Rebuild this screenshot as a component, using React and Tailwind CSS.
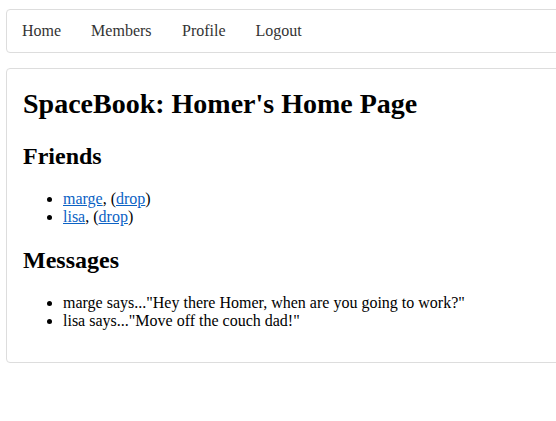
export default function App() {
  const serif = { fontFamily: '"Liberation Serif", "Times New Roman", serif' };
  return (
    <div className="w-full overflow-hidden bg-white text-black pb-[59px]" style={serif}>
      <nav className="ml-[6px] mt-[9px] w-[570px] h-[44px] border border-[#dddddd] rounded-[4px] flex items-center text-[16px] leading-[18px] text-[#333333]">
        <a className="px-[15px]">Home</a>
        <a className="px-[15px]">Members</a>
        <a className="pl-[15.5px] pr-[15px]">Profile</a>
        <a className="px-[15px]">Logout</a>
      </nav>
      <div className="ml-[6px] mt-[15px] w-[570px] border border-[#dddddd] rounded-[4px] p-[16px]">
        <h1 className="text-[28px] leading-[37px] font-bold">SpaceBook: Homer's Home Page</h1>
        <h2 className="mt-[20px] text-[24px] leading-[28px] font-bold">Friends</h2>
        <ul className="mt-[20px] pl-[40px] list-disc text-[16px] leading-[18px]">
          <li>
            <a href="#" className="text-[#0b62c4] underline">marge</a>, (<a href="#" className="text-[#0b62c4] underline">drop</a>)
          </li>
          <li>
            <a href="#" className="text-[#0b62c4] underline">lisa</a>, (<a href="#" className="text-[#0b62c4] underline">drop</a>)
          </li>
        </ul>
        <h2 className="mt-[20px] text-[24px] leading-[28px] font-bold">Messages</h2>
        <ul className="mt-[20px] mb-[16px] pl-[40px] list-disc text-[16px] leading-[18px]">
          <li>marge says..."Hey there Homer, when are you going to work?"</li>
          <li>lisa says..."Move off the couch dad!"</li>
        </ul>
      </div>
    </div>
  );
}
